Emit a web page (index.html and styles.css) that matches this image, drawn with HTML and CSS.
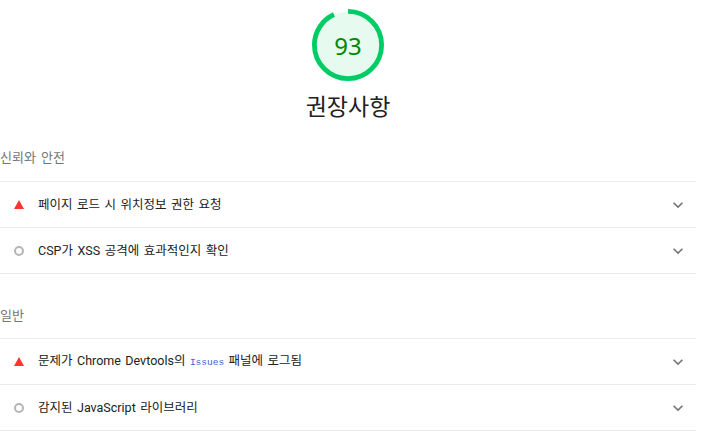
FILE: index.html
```html
<!DOCTYPE html>
<html lang="ko">
<head>
<meta charset="utf-8">
<link rel="stylesheet" href="styles.css">
</head>
<body>
<div class="report">
  <div class="category-header">
    <div class="gauge">
      <svg class="gauge-svg" viewBox="0 0 120 120" width="72" height="72">
        <circle class="gauge-base" cx="60" cy="60" r="56"></circle>
        <circle class="gauge-arc" cx="60" cy="60" r="56" transform="rotate(-90 60 60)" stroke-dasharray="327.2 351.9"></circle>
      </svg>
      <div class="gauge-value">93</div>
    </div>
    <div class="category-title">권장사항</div>
  </div>

  <div class="group">
    <div class="group-header">신뢰와 안전</div>
    <div class="audit">
      <span class="icon-fail"></span>
      <span class="audit-title">페이지 로드 시 위치정보 권한 요청</span>
      <svg class="chevron" viewBox="0 0 24 24" width="20" height="20"><path d="M7.41 8.59L12 13.17l4.59-4.58L18 10l-6 6-6-6 1.41-1.41z"/></svg>
    </div>
    <div class="audit">
      <span class="icon-info"></span>
      <span class="audit-title">CSP가 XSS 공격에 효과적인지 확인</span>
      <svg class="chevron" viewBox="0 0 24 24" width="20" height="20"><path d="M7.41 8.59L12 13.17l4.59-4.58L18 10l-6 6-6-6 1.41-1.41z"/></svg>
    </div>
  </div>

  <div class="group">
    <div class="group-header">일반</div>
    <div class="audit">
      <span class="icon-fail"></span>
      <span class="audit-title">문제가 Chrome Devtools의 <code>Issues</code> 패널에 로그됨</span>
      <svg class="chevron" viewBox="0 0 24 24" width="20" height="20"><path d="M7.41 8.59L12 13.17l4.59-4.58L18 10l-6 6-6-6 1.41-1.41z"/></svg>
    </div>
    <div class="audit">
      <span class="icon-info"></span>
      <span class="audit-title">감지된 JavaScript 라이브러리</span>
      <svg class="chevron" viewBox="0 0 24 24" width="20" height="20"><path d="M7.41 8.59L12 13.17l4.59-4.58L18 10l-6 6-6-6 1.41-1.41z"/></svg>
    </div>
  </div>
</div>
</body>
</html>
```

FILE: styles.css
```css
html, body {
  margin: 0;
  padding: 0;
  background: #fff;
}
body {
  font-family: Roboto, "Noto Sans CJK KR", sans-serif;
  color: #212121;
}
.report {
  width: 696px;
  padding-top: 9px;
}
.category-header {
  display: flex;
  flex-direction: column;
  align-items: center;
}
.gauge {
  position: relative;
  width: 72px;
  height: 72px;
}
.gauge-svg {
  display: block;
}
.gauge-base {
  fill: #e6faf0;
  stroke: none;
}
.gauge-arc {
  fill: none;
  stroke: #00cc66;
  stroke-width: 8;
}
.gauge-value {
  position: absolute;
  inset: 0;
  display: flex;
  align-items: center;
  justify-content: center;
  font-family: "Noto Sans", sans-serif;
  font-size: 24px;
  color: #008800;
}
.category-title {
  margin-top: 11px;
  font-size: 23px;
  line-height: 32px;
  color: #212121;
  word-spacing: 1px;
}
.group {
  display: flex;
  flex-direction: column;
}
.group-header {
  font-size: 13px;
  line-height: 20px;
  color: #757575;
  padding-top: 24px;
  padding-bottom: 13px;
  word-spacing: 2px;
}
.group + .group .group-header {
  padding-top: 32px;
  padding-bottom: 12px;
}
.audit {
  display: flex;
  align-items: center;
  height: 46px;
  border-top: 1px solid #ebebeb;
  box-sizing: border-box;
}
.audit:last-child {
  border-bottom: 1px solid #ebebeb;
  height: 47px;
}
.icon-fail {
  width: 0;
  height: 0;
  margin-left: 14px;
  border-left: 5px solid transparent;
  border-right: 5px solid transparent;
  border-bottom: 9px solid #ff3333;
}
.icon-info {
  width: 6px;
  height: 6px;
  margin-left: 14px;
  border: 2px solid #b5b5b5;
  border-radius: 50%;
}
.audit-title {
  flex: 1;
  margin-left: 14px;
  font-size: 12.5px;
  line-height: 20px;
  word-spacing: 1.4px;
}
.audit-title code {
  font-family: "Liberation Mono", "DejaVu Sans Mono", monospace;
  font-size: 9.5px;
  color: #3d5fc4;
  word-spacing: 0;
}
.chevron {
  fill: #757575;
  margin-right: 8px;
}
```
